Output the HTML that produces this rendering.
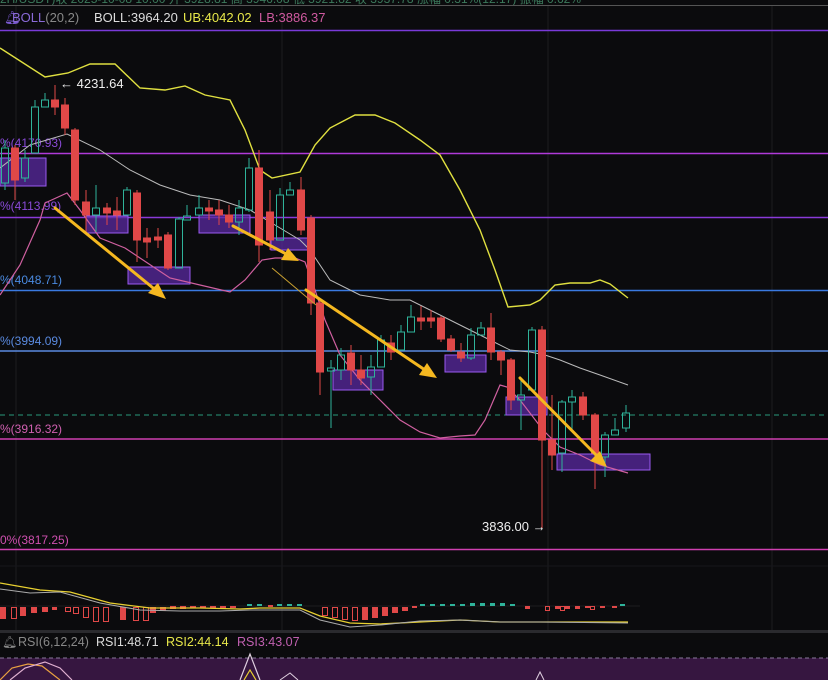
<!DOCTYPE html>
<html><head><meta charset="utf-8"><style>
html,body{margin:0;padding:0;background:#0b0b0d;}
svg{display:block;font-family:"Liberation Sans",sans-serif;}
</style></head><body>
<svg width="828" height="680" viewBox="0 0 828 680" xmlns="http://www.w3.org/2000/svg">
<rect width="828" height="680" fill="#0b0b0d"/>
<!-- top cut text strip -->
<text x="0" y="3" font-size="12" fill="#3c7a5c">2H/USDT)收 2025-10-08 10:00 开 3928.81 高 3946.08 低 3921.82 收 3937.78 涨幅 0.31%(12.17) 振幅 0.62%</text>
<line x1="0" y1="5.5" x2="828" y2="5.5" stroke="#555" stroke-width="1"/>
<!-- grid verticals -->
<g stroke="#1c1c20" stroke-width="1">
<line x1="282" y1="6" x2="282" y2="632"/><line x1="548" y1="6" x2="548" y2="632"/><line x1="772" y1="6" x2="772" y2="632"/><line x1="16" y1="6" x2="16" y2="632"/>
</g>
<!-- header -->
<text x="4" y="22" font-size="13" fill="#7a5ad0">🔔︎</text>
<text x="12" y="22" font-size="13" fill="#8a6ad8">BOLL<tspan fill="#888">(20,2)</tspan></text>
<text x="94" y="22" font-size="13" fill="#ddd">BOLL:3964.20</text>
<text x="183" y="22" font-size="13" fill="#e8e84a">UB:4042.02</text>
<text x="259" y="22" font-size="13" fill="#d05aa0">LB:3886.37</text>
<!-- horizontal levels -->
<line x1="0" y1="30.5" x2="828" y2="30.5" stroke="#7a3ad8" stroke-width="1.5"/>
<line x1="0" y1="153.5" x2="828" y2="153.5" stroke="#b03ad8" stroke-width="1.5"/>
<line x1="0" y1="217.5" x2="828" y2="217.5" stroke="#8a3ad8" stroke-width="1.5"/>
<line x1="0" y1="290.5" x2="828" y2="290.5" stroke="#3a7ae0" stroke-width="1.5"/>
<line x1="0" y1="351" x2="828" y2="351" stroke="#5a8ae0" stroke-width="1.5"/>
<line x1="0" y1="415" x2="828" y2="415" stroke="#2a9a7a" stroke-width="1" stroke-dasharray="5,4"/>
<line x1="0" y1="439" x2="828" y2="439" stroke="#d040b0" stroke-width="1.5"/>
<line x1="0" y1="549.5" x2="828" y2="549.5" stroke="#d040b0" stroke-width="1.5"/>
<line x1="0" y1="566" x2="828" y2="566" stroke="#17171b" stroke-width="1"/>
<!-- level labels -->
<g font-size="12">
<text x="0" y="147" fill="#8a4ad8">%(4170.93)</text>
<text x="0" y="210" fill="#8a4ad8">%(4113.99)</text>
<text x="0" y="284" fill="#4a8ae0">%(4048.71)</text>
<text x="0" y="345" fill="#5a8ae0">%(3994.09)</text>
<text x="0" y="433" fill="#d060b0">%(3916.32)</text>
<text x="0" y="544" fill="#d050b0">0%(3817.25)</text>
</g>
<!-- purple boxes -->
<g fill="#5a2aa0" fill-opacity="0.75" stroke="#9a5af0" stroke-width="1">
<rect x="0" y="158" width="46" height="28"/>
<rect x="86" y="216" width="42" height="17"/>
<rect x="128" y="267" width="62" height="17"/>
<rect x="199" y="215" width="51" height="18"/>
<rect x="271" y="238" width="42" height="12"/>
<rect x="333" y="370" width="50" height="20"/>
<rect x="445" y="355" width="41" height="17"/>
<rect x="506" y="397" width="41" height="18"/>
<rect x="557" y="454" width="93" height="16"/>
</g>
<!-- bollinger -->
<polyline fill="none" stroke="#e0e040" stroke-width="1.4" points="0,48 45,77 68,73 90,64 115,64 140,88 165,90 185,86 205,95 230,100 245,130 260,170 272,178 300,172 315,145 330,128 355,115 375,115 395,123 420,140 440,155 460,190 480,230 495,270 508,307 530,305 540,300 555,285 570,283 590,283 600,280 610,284 628,298"/>
<polyline fill="none" stroke="#bbb" stroke-width="1" points="0,168 30,145 67,134 100,150 130,170 160,185 190,195 220,200 250,210 275,225 300,240 310,250 330,280 360,295 390,300 410,300 430,310 460,325 490,340 510,350 530,352 545,355 560,360 580,368 600,375 628,385"/>
<polyline fill="none" stroke="#d060a0" stroke-width="1.2" points="0,295 20,265 40,220 45,203 67,193 80,210 100,238 125,248 140,258 170,278 200,285 230,292 245,280 262,260 275,258 295,258 305,262 315,290 325,320 340,355 360,380 380,400 400,420 420,432 440,438 460,436 475,435 485,420 500,385 507,387 520,400 543,430 560,447 580,455 600,465 628,473"/>
<!-- candles -->
<g id="c" stroke-width="1">
<g stroke="#e04848" fill="#e04848">
<path d="M15 145V200M55 85V115M65 98V135M75 128V205M86 190V232M107 203V225M117 197V230M137 190V262M147 228V258M158 228V248M168 232V270M209 200V220M219 200V225M229 205V228M259 150V262M270 190V250M301 177V235M311 215V315M320 298V395M351 345V385M361 355V385M391 335V360M421 306V330M431 310V328M441 316V342M451 335V352M461 343V362M491 313V360M501 350V375M511 358V410M542 326V528M552 395V470M583 392V420M595 413V489"/>
<rect x="11.5" y="148" width="7" height="32"/><rect x="51.5" y="100" width="7" height="7"/><rect x="61.5" y="105" width="7" height="23"/><rect x="71.5" y="130" width="7" height="70"/><rect x="82.5" y="202" width="7" height="13"/><rect x="103.5" y="208" width="7" height="5"/><rect x="113.5" y="211" width="7" height="4"/><rect x="133.5" y="193" width="7" height="47"/><rect x="143.5" y="238" width="7" height="4"/><rect x="154.5" y="237" width="7" height="3"/><rect x="164.5" y="235" width="7" height="33"/><rect x="205.5" y="208" width="7" height="3"/><rect x="215.5" y="210" width="7" height="5"/><rect x="225.5" y="215" width="7" height="7"/><rect x="255.5" y="168" width="7" height="77"/><rect x="266.5" y="212" width="7" height="28"/><rect x="297.5" y="190" width="7" height="40"/><rect x="307.5" y="218" width="7" height="85"/><rect x="316.5" y="303" width="7" height="69"/><rect x="347.5" y="353" width="7" height="17"/><rect x="357.5" y="370" width="7" height="8"/><rect x="387.5" y="343" width="7" height="9"/><rect x="417.5" y="318" width="7" height="3"/><rect x="427.5" y="318" width="7" height="3"/><rect x="437.5" y="318" width="7" height="21"/><rect x="447.5" y="339" width="7" height="11"/><rect x="457.5" y="352" width="7" height="6"/><rect x="487.5" y="328" width="7" height="24"/><rect x="497.5" y="352" width="7" height="8"/><rect x="507.5" y="360" width="7" height="40"/><rect x="538.5" y="330" width="7" height="110"/><rect x="548.5" y="440" width="7" height="15"/><rect x="579.5" y="397" width="7" height="18"/><rect x="591.5" y="415" width="7" height="38"/>
</g>
<g stroke="#2fb39a" fill="none">
<path d="M5 140V148M5 183V190M25 150V158M25 178V182M35 100V107M45 93V100M96 185V208M96 215V232M127 187V190M179 217V219M187 205V216M199 195V208M239 200V208M239 222V235M249 158V168M249 210V212M280 188V195M290 182V190M331 360V368M331 371V428M341 348V355M341 370V380M371 355V367M371 377V395M381 335V340M401 325V332M411 305V317M471 328V335M471 358V360M481 322V328M521 380V395M521 400V430M532 327V330M562 400V402M562 453V472M572 390V397M572 402V430M605 432V435M605 457V477M615 418V430M626 405V413M626 428V432"/>
<rect x="1.5" y="148" width="7" height="35"/><rect x="21.5" y="158" width="7" height="20"/><rect x="31.5" y="107" width="7" height="46"/><rect x="41.5" y="100" width="7" height="7"/><rect x="92.5" y="208" width="7" height="7"/><rect x="123.5" y="190" width="7" height="25"/><rect x="175.5" y="219" width="7" height="49"/><rect x="183.5" y="216" width="7" height="4"/><rect x="195.5" y="208" width="7" height="7"/><rect x="235.5" y="208" width="7" height="14"/><rect x="245.5" y="168" width="7" height="42"/><rect x="276.5" y="195" width="7" height="45"/><rect x="286.5" y="190" width="7" height="5"/><rect x="327.5" y="368" width="7" height="3"/><rect x="337.5" y="355" width="7" height="15"/><rect x="367.5" y="367" width="7" height="10"/><rect x="377.5" y="340" width="7" height="27"/><rect x="397.5" y="332" width="7" height="18"/><rect x="407.5" y="317" width="7" height="15"/><rect x="467.5" y="335" width="7" height="23"/><rect x="477.5" y="328" width="7" height="7"/><rect x="517.5" y="395" width="7" height="5"/><rect x="528.5" y="330" width="7" height="60"/><rect x="558.5" y="402" width="7" height="51"/><rect x="568.5" y="397" width="7" height="5"/><rect x="601.5" y="435" width="7" height="22"/><rect x="611.5" y="430" width="7" height="5"/><rect x="622.5" y="413" width="7" height="15"/>
</g>
</g>
<!-- arrows -->
<g stroke="#f5b820" stroke-width="3" fill="#f5b820" stroke-linecap="round">
<line x1="55" y1="208" x2="158" y2="292"/><polygon points="166,299 148,293 158,283" stroke="none"/>
<line x1="233" y1="226" x2="290" y2="256"/><polygon points="299,261 281,260 288,248" stroke="none"/>
<line x1="306" y1="290" x2="428" y2="372"/><polygon points="437,378 419,375 427,363" stroke="none"/>
<line x1="520" y1="378" x2="600" y2="459"/><polygon points="607,467 590,461 600,451" stroke="none"/>
</g>
<line x1="272" y1="268" x2="316" y2="305" stroke="#c9a030" stroke-width="1"/>
<!-- price annotations -->
<text x="60" y="88" font-size="13" fill="#eee">← 4231.64</text>
<text x="482" y="531" font-size="13" fill="#eee">3836.00 →</text>
<!-- MACD -->
<line x1="0" y1="606" x2="640" y2="606" stroke="#333" stroke-width="0.5"/>
<g fill="#e04848">
<rect x="0" y="607" width="6" height="12"/><rect x="20" y="607" width="6" height="9"/><rect x="31" y="607" width="6" height="6"/><rect x="42" y="607" width="6" height="5"/><rect x="52" y="607" width="5" height="3"/><rect x="120" y="607" width="6" height="13"/><rect x="150" y="607" width="6" height="6"/><rect x="160" y="607" width="6" height="4"/><rect x="170" y="606" width="6" height="3"/><rect x="180" y="606" width="6" height="3"/><rect x="190" y="606" width="6" height="2"/><rect x="200" y="606" width="6" height="2"/><rect x="210" y="606" width="6" height="2"/><rect x="220" y="606" width="6" height="2"/><rect x="230" y="606" width="6" height="2"/><rect x="268" y="605" width="5" height="2"/><rect x="362" y="607" width="6" height="13"/><rect x="372" y="607" width="6" height="11"/><rect x="382" y="607" width="6" height="9"/><rect x="392" y="607" width="6" height="6"/><rect x="402" y="607" width="6" height="4"/><rect x="412" y="606" width="5" height="2"/><rect x="525" y="606" width="5" height="3"/><rect x="555" y="606" width="5" height="3"/><rect x="565" y="606" width="5" height="3"/><rect x="575" y="606" width="5" height="3"/><rect x="585" y="606" width="5" height="2"/><rect x="600" y="606" width="5" height="2"/><rect x="612" y="606" width="5" height="2"/>
</g>
<g fill="none" stroke="#e04848" stroke-width="1">
<rect x="11.5" y="607.5" width="5" height="11"/><rect x="65.5" y="607.5" width="5" height="4"/><rect x="73.5" y="607.5" width="5" height="6"/><rect x="83.5" y="607.5" width="5" height="10"/><rect x="93.5" y="607.5" width="5" height="14"/><rect x="103.5" y="607.5" width="5" height="14"/><rect x="133.5" y="607.5" width="5" height="13"/><rect x="143.5" y="607.5" width="5" height="13"/><rect x="322.5" y="607.5" width="5" height="8"/><rect x="332.5" y="607.5" width="5" height="10"/><rect x="342.5" y="607.5" width="5" height="12"/><rect x="352.5" y="607.5" width="5" height="13"/><rect x="545.5" y="606.5" width="4" height="4"/><rect x="560.5" y="606.5" width="4" height="4"/><rect x="590.5" y="606.5" width="4" height="3"/>
</g>
<g fill="#2fb39a"><rect x="247" y="604" width="5" height="2"/><rect x="257" y="604" width="5" height="2"/><rect x="277" y="604" width="5" height="2"/><rect x="287" y="604" width="5" height="2"/><rect x="297" y="604" width="5" height="2"/><rect x="420" y="604" width="5" height="2"/><rect x="430" y="604" width="5" height="2"/><rect x="440" y="604" width="5" height="2"/><rect x="450" y="604" width="5" height="2"/><rect x="460" y="604" width="5" height="2"/><rect x="470" y="603" width="5" height="3"/><rect x="480" y="603" width="5" height="3"/><rect x="490" y="603" width="5" height="3"/><rect x="500" y="603" width="5" height="3"/><rect x="510" y="604" width="5" height="2"/><rect x="620" y="604" width="5" height="2"/></g>
<polyline fill="none" stroke="#e8d030" stroke-width="1.3" points="0,583 40,590 70,592 110,603 150,608 200,608 240,609 260,608 300,608 320,616 350,623 380,624 420,622 460,620 500,622 540,622 580,622 628,622"/>
<polyline fill="none" stroke="#aaa" stroke-width="1.1" points="0,589 30,593 60,592 100,603 140,610 180,611 220,611 250,610 300,610 320,620 350,627 380,625 420,621 460,620 500,622 540,622 628,623"/>
<!-- separator -->
<rect x="0" y="630" width="828" height="3" fill="#2a2a2e"/>
<text x="2" y="646" font-size="12" fill="#888">🔔︎</text>
<text x="18" y="646" font-size="12.5" fill="#888">RSI(6,12,24)</text>
<text x="96" y="646" font-size="12.5" fill="#ddd">RSI1:48.71</text>
<text x="166" y="646" font-size="12.5" fill="#e8e84a">RSI2:44.14</text>
<text x="237" y="646" font-size="12.5" fill="#c060b0">RSI3:43.07</text>
<rect x="0" y="658" width="828" height="22" fill="#361640"/>
<line x1="0" y1="658" x2="828" y2="658" stroke="#8a7a9a" stroke-width="1" stroke-dasharray="4,3"/>
<polyline fill="none" stroke="#e8a040" stroke-width="1.2" points="0,680 12,668 28,664 42,666 60,680"/>
<polyline fill="none" stroke="#e0b0d0" stroke-width="1.2" points="10,680 25,668 45,662 60,668 72,680"/>
<polyline fill="none" stroke="#e0d0e0" stroke-width="1.2" points="240,680 250,654 260,680"/>
<polyline fill="none" stroke="#e8d030" stroke-width="1.2" points="244,680 250,670 256,680"/>
<polyline fill="none" stroke="#e0d0e0" stroke-width="1" points="280,680 290,673 298,680"/>
<polyline fill="none" stroke="#e0d0e0" stroke-width="1" points="536,680 540,672 544,680"/>
</svg>
</body></html>
